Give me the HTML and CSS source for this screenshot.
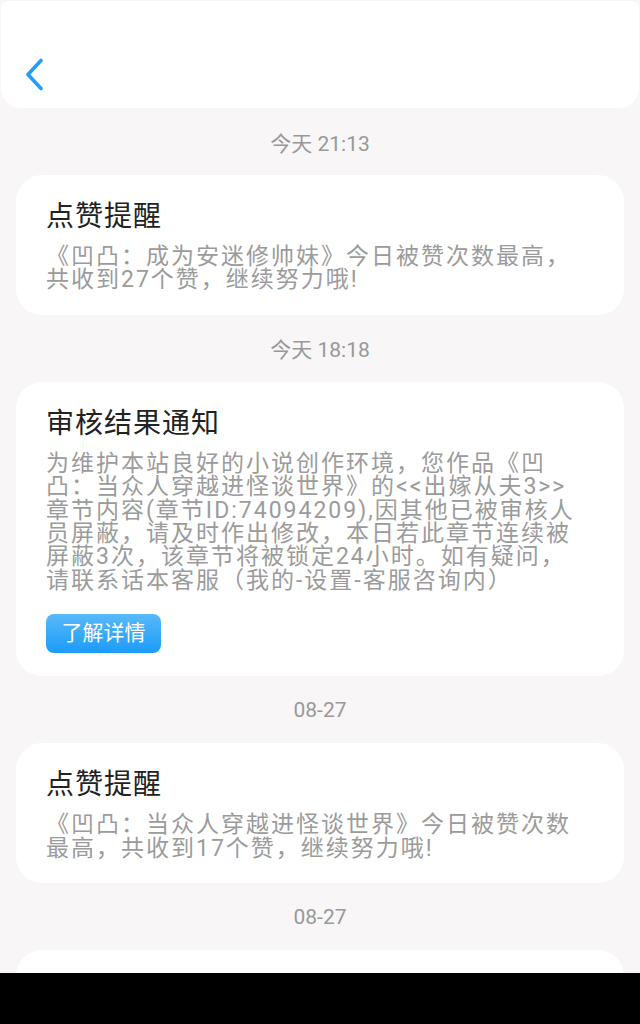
FILE: index.html
```html
<!DOCTYPE html>
<html lang="zh-CN">
<head>
    <meta charset="UTF-8">
    <meta name="viewport" content="width=device-width, initial-scale=1.0">
    <title>消息通知</title>
    <link rel="stylesheet" href="styles.css">
</head>
<body>
    <div class="screen">
        <div class="content">
            <header class="topbar">
                <a class="back" href="#">
                    <svg width="22" height="34" viewBox="0 0 22 34">
                        <path d="M18 2.5 L5 16.5 L18 30.5" fill="none" stroke="#1e9ffb" stroke-width="3.6" stroke-linecap="round" stroke-linejoin="round"/>
                    </svg>
                </a>
            </header>

            <div class="time">今天 21:13</div>
            <div class="card">
                <h2 class="title">点赞提醒</h2>
                <p class="text">《凹凸：成为安迷修帅妹》今日被赞次数最高，共收到27个赞，继续努力哦!</p>
            </div>

            <div class="time">今天 18:18</div>
            <div class="card">
                <h2 class="title">审核结果通知</h2>
                <p class="text">为维护本站良好的小说创作环境，您作品《凹<br>凸：当众人穿越进怪谈世界》的&lt;&lt;出嫁从夫3&gt;&gt;<br>章节内容(章节ID:74094209),因其他已被审核人<br>员屏蔽，请及时作出修改，本日若此章节连续被<br>屏蔽3次，该章节将被锁定24小时。如有疑问，<br>请联系话本客服（我的-设置-客服咨询内）</p>
                <a class="btn" href="#">了解详情</a>
            </div>

            <div class="time">08-27</div>
            <div class="card">
                <h2 class="title">点赞提醒</h2>
                <p class="text">《凹凸：当众人穿越进怪谈世界》今日被赞次数最高，共收到17个赞，继续努力哦!</p>
            </div>

            <div class="time">08-27</div>
            <div class="card card-empty"></div>
        </div>
        <div class="navbar"></div>
    </div>
</body>
</html>
```

FILE: styles.css
```css
body {
    margin: 0;
    background-color: #f8f6f6;
    font-family: Roboto, "Noto Sans CJK SC", sans-serif;
    color: #222;
}
.screen {
    height: 1024px;
    display: flex;
    flex-direction: column;
}
.content {
    flex: 1;
    overflow: hidden;
}
.navbar {
    height: 51px;
    background-color: #000;
}
.topbar {
    height: 107px;
    margin: 1px 1px 0;
    background-color: #fff;
    border-radius: 6px 6px 20px 20px;
    box-sizing: border-box;
    padding: 57px 0 0 22px;
}
.back {
    display: block;
    width: 22px;
    height: 34px;
}
.time {
    height: 67px;
    display: flex;
    align-items: center;
    justify-content: center;
    font-size: 21px;
    color: #999;
}
.card {
    margin: 0 16px;
    background-color: #fff;
    border-radius: 26px;
    padding: 24px 30px 23px;
}
.card-empty {
    height: 100px;
}
.title {
    margin: 0 0 10px;
    font-size: 28px;
    font-weight: normal;
    line-height: 36px;
    letter-spacing: 1px;
    color: #222;
}
.text {
    margin: 0;
    font-size: 23px;
    line-height: 23.4px;
    letter-spacing: 2px;
    color: #9b9b9b;
}
.btn {
    display: inline-block;
    margin-top: 22px;
    width: 115px;
    height: 39px;
    line-height: 39px;
    text-align: center;
    border-radius: 8px;
    background: linear-gradient(#58b9fb, #1b9bf8);
    color: #fff;
    font-size: 21px;
    text-decoration: none;
}
```
